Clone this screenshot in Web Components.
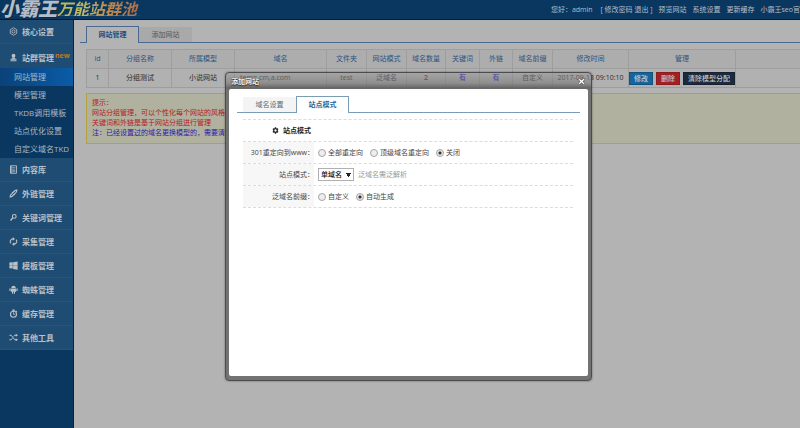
<!DOCTYPE html>
<html lang="zh-CN">
<head>
<meta charset="utf-8">
<title>小霸王万能站群池</title>
<style>
html, body { margin: 0; min-height: 100vh; }
body {
  background: #b3b3b3; color: #2c2c2c; overflow: hidden;
  font-family: "Open Sans", "Noto Sans CJK SC", sans-serif; font-size: 7px; line-height: 10px;
}
</style>
</head>
<body>
<admin-app></admin-app>
<script>
const GLYPHS = {
  hex: '<path d="M12 2l8.5 5v10L12 22l-8.5-5V7z" fill="none" stroke="currentColor" stroke-width="2.2"/><circle cx="12" cy="12" r="4" fill="none" stroke="currentColor" stroke-width="2.2"/>',
  user: '<circle cx="12" cy="7" r="5"/><path d="M9 11h6v3l5 2v2H4v-2l5-2zM4 19.500h16V22H4z"/>',
  book: '<path d="M4 2h16v20H4z" fill="none" stroke="currentColor" stroke-width="2.4"/><path d="M8 7h9M8 11h9M8 15h9M8 18h9" stroke="currentColor" stroke-width="1.800"/><path d="M4 2h3v20H4z"/>',
  link: '<path d="M14 6c2-2 4-3 7-3 0 4-2 7-5 9M10 18c-2 2-4 3-7 3 0-4 2-7 5-9M8 12l6-6M16 12l-6 6M8 10l7-4M16 14l-7 4" fill="none" stroke="currentColor" stroke-width="3"/>',
  key: '<circle cx="14" cy="9" r="5" fill="none" stroke="currentColor" stroke-width="3"/><path d="M10 13l-6 7" stroke="currentColor" stroke-width="4"/>',
  refresh: '<path d="M5 17c-4-5-1-12 6-12M19 7c4 5 1 12-6 12" fill="none" stroke="currentColor" stroke-width="3"/><path d="M10 0l6 5-6 5zM14 14l-6 5 6 5z"/>',
  windows: '<path d="M1 4l9-1v8H1zM11 3l12-2v10H11zM1 12h9v8l-9-1zM11 12h12v11l-12-2z"/>',
  android: '<path d="M6 8a6 6 0 0 1 12 0zM5 9h14v9H5zM1 9h3v7H1zM20 9h3v7h-3zM8 18h3v5H8zM13 18h3v5h-3z"/>',
  watch: '<circle cx="12" cy="14" r="8" fill="none" stroke="currentColor" stroke-width="3"/><path d="M9 1h6v4H9zM19 4l3 3-2 2-3-3z"/><path d="M12 9v5h4" fill="none" stroke="currentColor" stroke-width="2.400"/>',
  shuffle: '<path d="M1 6h5l9 12h5M1 18h5l3-4M12 9l3-3h5" fill="none" stroke="currentColor" stroke-width="2.600"/><path d="M18 2l6 4-6 4zM18 14l6 4-6 4z"/>',
  gear: '<path fill-rule="evenodd" d="M10 1h4l1 3 2 1 3-1 2 4-2 2v4l2 2-2 4-3-1-2 1-1 3h-4l-1-3-2-1-3 1-2-4 2-2v-4L2 8l2-4 3 1 2-1zM12 8a4 4 0 1 0 0 8 4 4 0 0 0 0-8z"/>',
  close: '<path d="M4 4l16 16M20 4L4 20" stroke="#444" stroke-width="9"/><path d="M4 4l16 16M20 4L4 20" stroke="currentColor" stroke-width="5"/>'
};
function define(name, html, setup) {
  const t = document.createElement('template');
  t.innerHTML = html;
  customElements.define(name, class extends HTMLElement {
    constructor() {
      super();
      this.attachShadow({ mode: 'open' }).append(t.content.cloneNode(true));
    }
    connectedCallback() { if (setup) setup(this, this.shadowRoot); }
  });
}

define('ui-icon', `<style>:host{display:inline-flex;width:9px;height:9px;flex:none}svg{width:100%;height:100%;fill:currentColor}</style><svg viewBox="0 0 24 24" aria-hidden="true"></svg>`,
  (el, r) => { r.querySelector('svg').innerHTML = GLYPHS[el.getAttribute('name')]; });

define('site-logo', `<style>
:host{display:block;font-family:"Noto Sans CJK SC",sans-serif;font-style:italic;white-space:nowrap}
a{display:flex;align-items:flex-start;height:19px;text-decoration:none;background:linear-gradient(90deg,transparent,#4f7195 80%,transparent) 0 15px/143px 1px no-repeat}
.a{font-size:19px;line-height:16px;font-weight:900;color:#b5bec7;text-shadow:1px 1px 0 #16283c}
.b{font-size:16px;line-height:16px;font-weight:700;padding-right:4px;background:linear-gradient(90deg,#b8bd55,#bdb868 30%,#bd8a4c 62%,#a86c50);-webkit-background-clip:text;background-clip:text;color:transparent}
</style><a href="#"><span class="a">小霸王</span><span class="b">万能站群池</span></a>`);

define('top-bar', `<style>
:host{display:flex;align-items:center;justify-content:space-between;height:19px;background:#0a375f;border-bottom:1px solid #061c31;color:#b4bfca}
nav{display:flex;gap:6px;white-space:nowrap;flex:none}
a{color:inherit;text-decoration:none}
</style><site-logo></site-logo><nav><span>您好：admin</span><span>&nbsp;[ <a href="#">修改密码</a> <a href="#">退出</a> ]</span><a href="#">预览网站</a><a href="#">系统设置</a><a href="#">更新缓存</a><a href="#">小霸王seo官</a></nav>`);

define('side-group', `<style>
:host{display:block}
a{display:flex;align-items:center;gap:4px;height:24px;box-sizing:border-box;padding-left:9px;border-bottom:1px solid #26557c;background:#1f4c72;color:#b7c1ca;text-decoration:none;font-size:8px;font-weight:700;white-space:nowrap}
:host([open]) a{padding-top:4px;border-color:#1f4c72}
sup{color:#c07a1e;font-size:7px;line-height:8px;margin-left:-3px;margin-top:-4px}
sup:empty{display:none}
div{background:#0a375f}
</style><a href="#"><ui-icon></ui-icon><span></span><sup></sup></a><div><slot></slot></div>`,
  (el, r) => {
    r.querySelector('ui-icon').setAttribute('name', el.getAttribute('icon'));
    r.querySelector('ui-icon').connectedCallback();
    r.querySelector('span').textContent = el.getAttribute('label');
    r.querySelector('sup').textContent = el.getAttribute('badge') || '';
  });

define('side-link', `<style>
:host{display:block}
a{display:block;height:18px;line-height:17px;padding-left:14px;font-size:8px;color:#a9b7c4;text-decoration:none;white-space:nowrap}
:host([active]) a{background:linear-gradient(90deg,#0a4279,#0b5ba8)}
</style><a href="#"><slot></slot></a>`);

define('side-bar', `<style>
:host{display:block;width:73px;flex:none;background:#0a375f;border-right:1px solid #0d2238}
</style>
<side-group icon="hex" label="核心设置"></side-group>
<side-group icon="user" label="站群管理" badge="new" open>
<side-link active>网站管理</side-link><side-link>模型管理</side-link><side-link>TKDB调用模板</side-link><side-link>站点优化设置</side-link><side-link>自定义域名TKD</side-link>
</side-group>
<side-group icon="book" label="内容库"></side-group>
<side-group icon="link" label="外链管理"></side-group>
<side-group icon="key" label="关键词管理"></side-group>
<side-group icon="refresh" label="采集管理"></side-group>
<side-group icon="windows" label="模板管理"></side-group>
<side-group icon="android" label="蜘蛛管理"></side-group>
<side-group icon="watch" label="缓存管理"></side-group>
<side-group icon="shuffle" label="其他工具"></side-group>`);

define('tab-strip', `<style>
:host{display:flex;align-items:flex-end;padding-left:6px;border-bottom:1px solid var(--line);height:15px}
</style><slot></slot>`);
define('tab-item', `<style>
:host{display:block}
button{all:unset;box-sizing:border-box;display:block;width:53px;height:15px;line-height:15px;text-align:center;color:var(--dim);background:var(--off);cursor:pointer}
:host([active]) button{height:17px;line-height:16px;margin-bottom:-1px;border:1px solid var(--line);border-bottom:0;background:var(--on);color:var(--accent);font-weight:700}
</style><button type="button"><slot></slot></button>`);

define('site-table', `<style>
:host{display:block}
table{width:100%;border-collapse:collapse;table-layout:fixed;background:#b1b1b1}
th,td{height:18px;padding:0;border:1px solid #9e9e9e;text-align:center;font-weight:400;white-space:nowrap}
th{color:#2b5481;background:#adadad}
tr>:last-child{border-right:0}
.dom{text-align:left;padding-left:5px}
b{color:#b01020}
a{color:#3326b8;text-decoration:none;font-weight:700}
.ops{display:flex;gap:3px;justify-content:center}
button{all:unset;box-sizing:border-box;height:13px;line-height:12px;padding:0 4px;color:#c3c9ce;font-weight:500;background:#17649c;border:1px solid #12527f}
.del{background:#a21f24;border-color:#8b1c20}.clr{background:#1c2a3b;border-color:#172230}
</style><table>
<colgroup><col style="width:22px"><col style="width:63px"><col style="width:63px"><col style="width:92px"><col style="width:40px"><col style="width:40px"><col style="width:39px"><col style="width:34px"><col style="width:33px"><col style="width:40px"><col style="width:76px"><col style="width:107px"><col></colgroup>
<thead><tr><th>id</th><th>分组名称</th><th>所属模型</th><th>域名</th><th>文件夹</th><th>网站模式</th><th>域名数量</th><th>关键词</th><th>外链</th><th>域名前缀</th><th>修改时间</th><th>管理</th><th></th></tr></thead>
<tbody><tr><td>1</td><td>分组测试</td><td>小说网站</td><td class="dom">temp.cm,a.com</td><td>test</td><td>泛域名</td><td><b>2</b></td><td><a href="#">有</a></td><td><a href="#">有</a></td><td>自定义</td><td>2017-09-13 09:10:10</td><td><div class="ops"><button type="button">修改</button><button type="button" class="del">删除</button><button type="button" class="clr">清除模型分配</button></div></td><td></td></tr></tbody></table>`);

define('tip-box', `<style>
:host{display:block;padding:4px 5px 5px;border:1px solid #b3a23f;border-right:0;background:#b1b1a0;color:#b5201f}
p{margin:0;white-space:nowrap}.note{color:#2a22a8}
</style><p>提示：</p><p>网站分组管理，可以个性化每个网站的风格，</p><p>关键词和外链是基于网站分组进行管理</p><p class="note">注：已经设置过的域名更换模型的，需要清除</p>`);

define('form-row', `<style>
:host{display:grid;grid-template-columns:71px 1fr;height:21px;border-bottom:1px dashed #dcdcdc}
.l{display:flex;align-items:center;justify-content:flex-end;background:#f7f7f7;color:#444;white-space:nowrap}
.f{display:flex;align-items:center;padding-left:4px;color:#444}
</style><div class="l"><slot name="label"></slot></div><div class="f"><slot></slot></div>`);

define('radio-set', `<style>
:host,label{display:flex;align-items:center}:host{gap:7px}label{gap:2px;white-space:nowrap}
input{appearance:none;box-sizing:border-box;width:8px;height:8px;margin:0;border:1px solid #a5a5a5;border-radius:50%;background:#eee}
input:checked{background:radial-gradient(circle,#333 0 1px,#e6e6e6 2px)}
</style>`,
  (el, r) => {
    el.getAttribute('options').split(',').forEach(text => {
      const l = document.createElement('label'), i = document.createElement('input');
      i.type = 'radio'; i.name = el.getAttribute('name');
      i.checked = text === el.getAttribute('value');
      l.append(i, text); r.append(l);
    });
  });

define('modal-window', `<style>
:host{display:block;box-sizing:border-box;padding:0 3px 4px;border:1px solid #4c4c4c;border-radius:4px;
 background:linear-gradient(rgba(150,150,150,.45),rgba(120,120,120,.6) 10px,rgba(95,95,95,.9) 15px,rgba(112,112,112,.96) 18px);box-shadow:0 0 2px rgba(0,0,0,.5)}
header{display:flex;align-items:center;justify-content:space-between;height:15px;padding:1px 3px 0 2px;color:#f4f4f4;font-weight:700;text-shadow:0 0 1px #222,0 1px 1px #222}
button{all:unset;display:flex}ui-icon{width:7px;height:7px;color:#fff}
section{box-sizing:border-box;min-height:287px;padding:8px;background:#fff;border-radius:2px}
</style><header><span></span><button type="button" aria-label="关闭"><ui-icon name="close"></ui-icon></button></header><section><slot></slot></section>`,
  (el, r) => { r.querySelector('span').textContent = el.getAttribute('heading'); });

define('site-dialog', `<style>
:host{display:block}
tab-strip{--line:#7b9cb5;--off:#f4f4f4;--on:#fff;--dim:#666;--accent:#1f6a96}
form{margin:6px 7px 0 6px;border-top:1px dashed #dcdcdc}
b{color:#222}ui-icon{width:7px;height:7px;color:#222}
.head{display:flex;align-items:center;gap:4px;height:21px;padding-left:29px;border-bottom:1px dashed #dcdcdc}
select{appearance:none;box-sizing:border-box;width:36px;height:13px;margin:0;padding:0 8px 0 2px;border:1px solid #b0b0b0;border-radius:0;color:#111;font:inherit;font-weight:500;line-height:11px;
 background:linear-gradient(#222,#222) 27px 4px/5px 1px no-repeat,linear-gradient(#222,#222) 28px 5px/3px 2px no-repeat,linear-gradient(#222,#222) 29px 7px/1px 1px no-repeat,#fff}
.pick{display:flex;align-items:center;gap:4px}.hint{color:#999}
</style><modal-window heading="添加网站">
<tab-strip><tab-item>域名设置</tab-item><tab-item active>站点模式</tab-item></tab-strip>
<form><div class="head"><ui-icon name="gear"></ui-icon><b>站点模式</b></div>
<form-row><span slot="label">301重定向到www：</span><radio-set name="redirect" options="全部重定向,顶级域名重定向,关闭" value="关闭"></radio-set></form-row>
<form-row><label slot="label" for="mode">站点模式：</label><div class="pick"><select id="mode"><option>单域名</option><option>泛域名</option></select><span class="hint">泛域名需泛解析</span></div></form-row>
<form-row><span slot="label">泛域名前缀：</span><radio-set name="prefix" options="自定义,自动生成" value="自动生成"></radio-set></form-row>
</form></modal-window>`);

define('admin-app', `<style>
:host{display:flex;flex-direction:column;min-height:100vh;position:relative}
.body{display:flex;flex:1}
main{flex:1;min-width:0;padding:7px 0 0 6px}
main tab-strip{--line:#4a6a92;--off:#a9a9a9;--on:#b3b3b3;--dim:#555;--accent:#1f4e80}
.content{display:flex;flex-direction:column;gap:5px;padding:6px 0 0 6px}
site-dialog{position:absolute;left:225px;right:208px;top:72px}
</style><top-bar></top-bar><div class="body"><side-bar></side-bar><main>
<tab-strip><tab-item active>网站管理</tab-item><tab-item>添加网站</tab-item></tab-strip>
<div class="content"><site-table></site-table><tip-box></tip-box></div></main></div>
<site-dialog></site-dialog>`);
</script>
</body>
</html>
